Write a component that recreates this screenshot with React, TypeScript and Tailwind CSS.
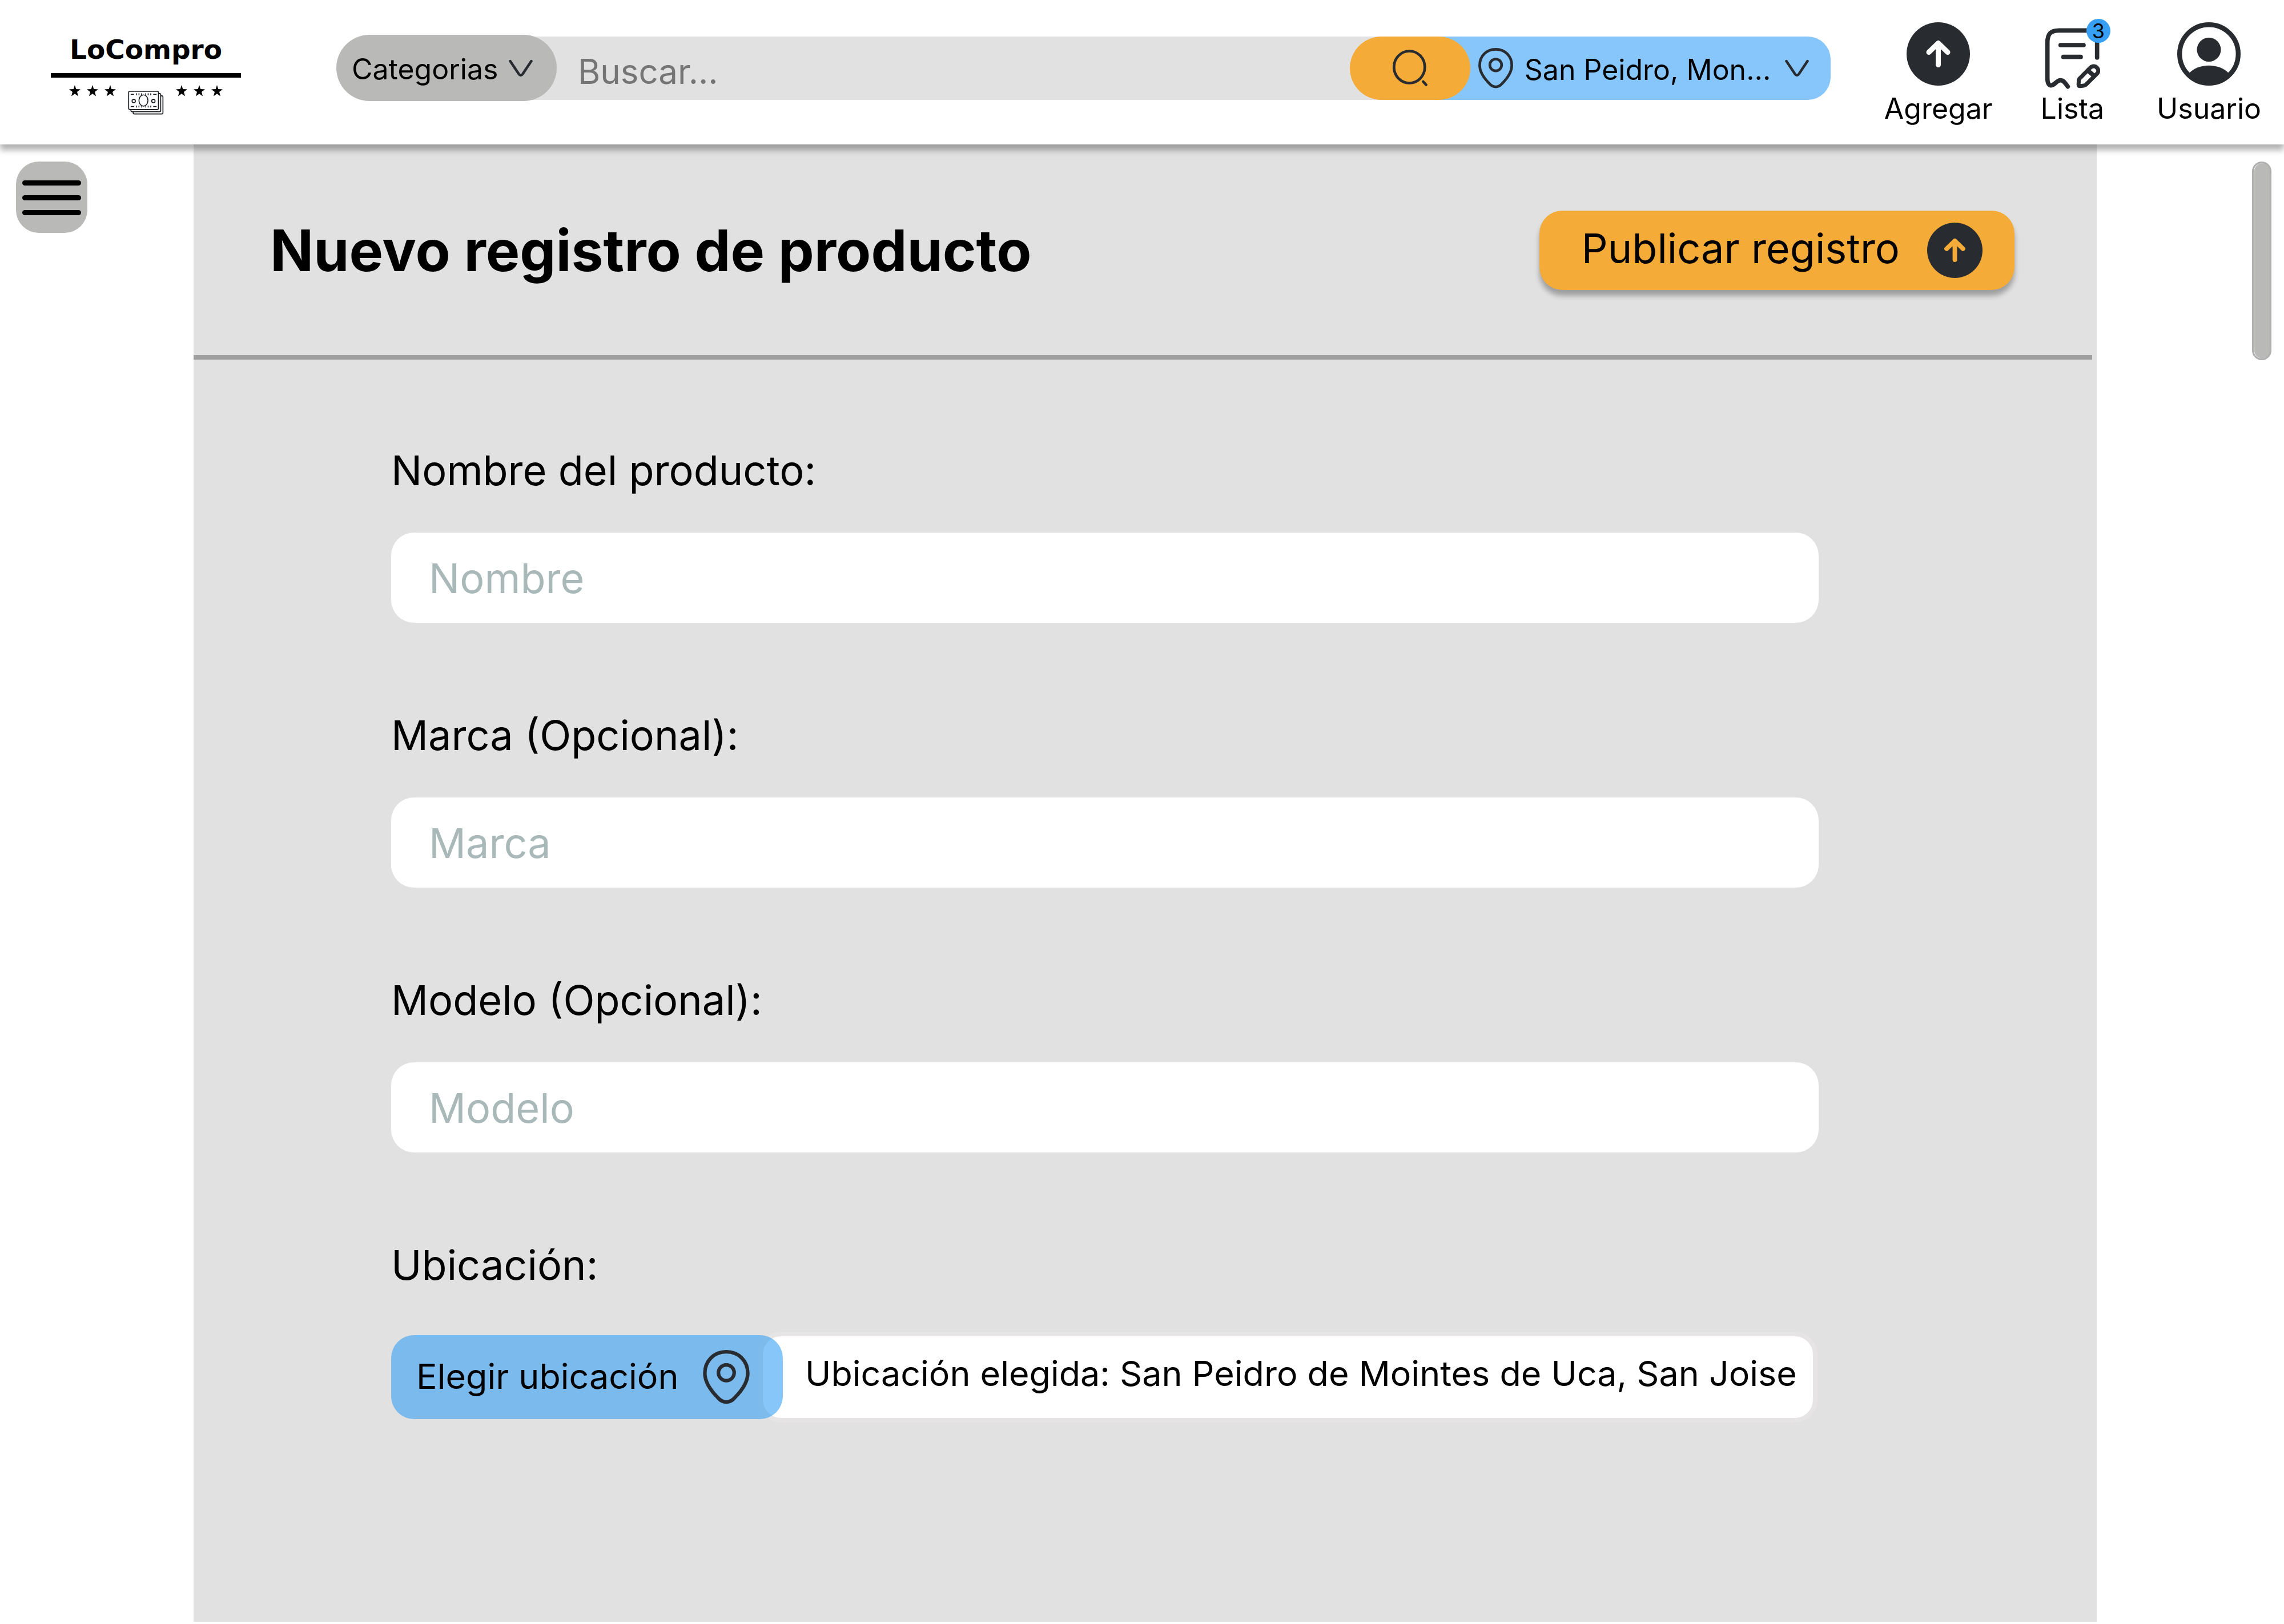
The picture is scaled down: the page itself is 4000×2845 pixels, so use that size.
import type { ReactNode } from "react";

function Chevron() {
  return (
    <svg viewBox="0 0 42 31" className="pointer-events-none h-[31px] w-[42px] shrink-0" fill="none" stroke="#282c31" strokeWidth="4.5" strokeLinecap="round" aria-hidden="true">
      <path d="M2.5 3 L17.5 25.5 Q21 30.5 24.5 25.5 L39.5 3" />
    </svg>
  );
}

function Pin({ className }: { className: string }) {
  return (
    <svg viewBox="0 0 61 71" className={className} fill="none" stroke="#282c31" strokeWidth="4.7" aria-hidden="true">
      <path d="M30.5 2.4 C14 2.4 2.4 14.5 2.4 30.5 C2.4 43.5 11.5 54.5 19.5 62.5 C26 70 35 70 41.5 62.5 C49.5 54.5 58.6 43.5 58.6 30.5 C58.6 14.5 47 2.4 30.5 2.4 Z" />
      <circle cx="30.5" cy="29.8" r="10.3" />
    </svg>
  );
}

function ArrowUpDisc({ className, arrow }: { className: string; arrow: string }) {
  return (
    <svg viewBox="0 0 111 111" className={className} fill="none" aria-hidden="true">
      <circle cx="55.5" cy="55.5" r="55.5" fill="#282c31" />
      <path d="M55.5 38 V74.5 M39 52.5 L55.5 36.5 L72 52.5" stroke={arrow} strokeWidth="9" strokeLinecap="round" strokeLinejoin="round" />
    </svg>
  );
}

function ListIcon() {
  return (
    <svg viewBox="120 88 291 321" className="h-[107px] w-[97px]" fill="none" stroke="#282c31" strokeWidth="23" strokeLinecap="round" strokeLinejoin="round" aria-hidden="true">
      <path d="M345 101 H195 C150 101 134 120 134 165 V352 C134 384 145 391 156 389.500 C177 385 182 363 203 363 C222 363 228 380 241 396" />
      <path d="M395 130 V244 M203 178 H324 M218 240 H309" />
      <path strokeWidth="21" d="M302 355 L359 297 C371 285 388 287 395 298 C404 307 403 320 394 329 L338 384 Q333 390 325 391 L306 393.500 Q297 394 297.500 385 L299 364 Q299 358 302 355 Z" />
      <path strokeLinecap="butt" d="M346 311 L381 341" />
    </svg>
  );
}

function UserIcon() {
  return (
    <svg viewBox="0 0 111 111" className="size-[111px]" aria-hidden="true">
      <circle cx="55.5" cy="55.5" r="51.3" fill="none" stroke="#282c31" strokeWidth="8.4" />
      <circle cx="55.5" cy="48" r="21" fill="#282c31" />
      <path d="M20 90 C37 71 74 71 91 90 A50 50 0 0 1 20 90 Z" fill="#282c31" />
    </svg>
  );
}

function Star() {
  return (
    <svg viewBox="0 0 20 20" className="size-5" aria-hidden="true">
      <path d="M10 0 L12.300 7 L20 7.400 L14 12 L16 19.500 L10 15.200 L4 19.500 L6 12 L0 7.400 L7.700 7 Z" />
    </svg>
  );
}

function Stars() {
  return (
    <span className="flex gap-[11px]">
      <Star />
      <Star />
      <Star />
    </span>
  );
}

function Money() {
  return (
    <svg viewBox="671 475 192 128" className="mt-2.5 h-[42px] w-[63px]" fill="#fff" stroke="#15191d" strokeWidth="5" aria-hidden="true">
      <rect x="699" y="502" width="159" height="97" rx="6" />
      <rect x="687" y="490" width="159" height="97" rx="6" />
      <rect x="675" y="478" width="159" height="97" rx="6" />
      <ellipse cx="754" cy="527" rx="24" ry="30" />
      <circle cx="702" cy="530" r="9" />
      <circle cx="807" cy="530" r="9" />
      <path d="M686 494 H704 M806 494 H824 M686 559 H704 M806 559 H824" />
      <path d="M716 489 V499 M730 489 V499 M744 489 V496 M766 489 V496 M779 489 V499 M793 489 V499 M716 554 V564 M730 554 V564 M744 558 V564 M766 558 V564 M779 554 V564 M793 554 V564" />
    </svg>
  );
}

function Logo() {
  return (
    <a href="#inicio" className="flex w-[333px] shrink-0 flex-col items-center pt-[63px]">
      <span className="font-['DejaVu_Sans',sans-serif] text-[47px] leading-[48px] font-bold">LoCompro</span>
      <span className="mt-[17px] h-2 w-full bg-black" />
      <span className="mt-[13px] flex items-start gap-[21px]">
        <Stars />
        <Money />
        <Stars />
      </span>
    </a>
  );
}

function SearchBar() {
  return (
    <form className="mt-[61px] flex min-w-0 flex-1 items-center" onSubmit={(e) => e.preventDefault()}>
      <div className="relative z-10 flex h-[116px] shrink-0 items-center gap-[18px] rounded-full bg-[#b9b9b7] pr-[42px] pl-[27px]">
        <select aria-label="Categorias" className="appearance-none pt-1 text-[50px] leading-[60px]">
          <option>Categorias</option>
        </select>
        <Chevron />
      </div>
      <input
        type="search"
        aria-label="Buscar"
        placeholder="Buscar..."
        className="-mr-14 -ml-14 h-[111px] min-w-0 flex-1 bg-[#e1e1e1] pt-3 pr-20 pl-[93px] text-[60px] leading-[74px] placeholder:text-[#757575] placeholder:opacity-100"
      />
      <button type="submit" aria-label="Buscar" className="relative z-10 flex h-[111px] w-[211px] shrink-0 items-center justify-center rounded-full bg-[#f5ab37]">
        <svg viewBox="0 0 61 64" className="h-16 w-[61px]" fill="none" stroke="#282c31" strokeWidth="4.7" strokeLinecap="round" aria-hidden="true">
          <ellipse cx="29.3" cy="30.5" rx="27" ry="28" />
          <path d="M53.500 56 L58.500 61.500" />
        </svg>
      </button>
      <div className="-ml-14 flex h-[111px] shrink-0 items-center gap-5 rounded-r-[40px] bg-[#87c6fa] pr-[38px] pl-[70px]">
        <Pin className="h-[71px] w-[61px] shrink-0" />
        <select aria-label="Ubicación" className="mr-1 appearance-none pt-1.5 text-[50px] leading-[60px]">
          <option>San Peidro, Mon...</option>
        </select>
        <Chevron />
      </div>
    </form>
  );
}

function NavItem({ label, className = "", children }: { label: string; className?: string; children: ReactNode }) {
  return (
    <a href={`#${label.toLowerCase()}`} className={`flex flex-col items-center ${className}`}>
      <span className="relative flex h-[111px] items-end">{children}</span>
      <span className="mt-2.5 text-[50px] leading-[60px]">{label}</span>
    </a>
  );
}

function Header() {
  return (
    <header className="relative z-20 flex h-[253px] shrink-0 items-start bg-white pr-10 pl-[89px] shadow-[0_10px_10px_rgba(0,0,0,0.3)]">
      <Logo />
      <div className="flex min-w-0 flex-1 pr-[94px] pl-[167px]">
        <SearchBar />
      </div>
      <nav className="flex shrink-0 gap-[84px] pt-[39px]">
        <NavItem label="Agregar">
          <ArrowUpDisc className="size-[111px]" arrow="#ffffff" />
        </NavItem>
        <NavItem label="Lista" className="pr-2">
          <span className="-mb-1.5">
            <ListIcon />
          </span>
          <span className="absolute -top-1.5 -right-[18px] flex size-[42px] items-center justify-center rounded-full bg-[#37a0f5] text-[36px] leading-none">3</span>
        </NavItem>
        <NavItem label="Usuario">
          <UserIcon />
        </NavItem>
      </nav>
    </header>
  );
}

function Field({ id, label, placeholder }: { id: string; label: string; placeholder: string }) {
  return (
    <div className="flex flex-col gap-[66px]">
      <label htmlFor={id} className="text-[72px] leading-[86px]">
        {label}
      </label>
      <input
        id={id}
        type="text"
        placeholder={placeholder}
        className="h-[158px] w-full rounded-[40px] bg-white px-[66px] text-[72px] leading-[86px] placeholder:text-[#a9b9b9] placeholder:opacity-100"
      />
    </div>
  );
}

export default function App() {
  return (
    <div className="flex min-h-screen flex-col bg-white pb-1 font-[Inter,sans-serif] text-black">
      <Header />
      <div className="flex flex-1">
        <aside className="w-[339px] shrink-0 pt-[30px] pl-7">
          <button type="button" aria-label="Menú" className="flex size-[125px] flex-col items-center justify-center gap-[17px] rounded-[40px] bg-[#b9b9b7] pt-0.5">
            <span className="h-[9px] w-[103px] rounded-full bg-black" />
            <span className="h-[9px] w-[103px] rounded-full bg-black" />
            <span className="h-[9px] w-[103px] rounded-full bg-black" />
          </button>
        </aside>
        <main className="min-w-0 flex-1 bg-[#e1e1e1]">
          <div className="flex items-center justify-between pt-[116px] pr-36 pb-[114px] pl-[134px]">
            <h1 className="text-[100px] leading-[120px] font-bold">Nuevo registro de producto</h1>
            <button type="submit" form="registro" className="flex h-[139px] items-center gap-12 rounded-[40px] bg-[#f5ab37] pr-14 pl-[74px] shadow-[0_10px_10px_rgba(0,0,0,0.3)]">
              <span className="pb-2 text-[72px] leading-[86px]">Publicar registro</span>
              <ArrowUpDisc className="size-[97px]" arrow="#f5ab37" />
            </button>
          </div>
          <hr className="mr-2 h-2 border-0 bg-[#9f9f9f]" />
          <form id="registro" className="flex flex-col gap-[154px] pt-[151px] pr-[487px] pb-20 pl-[346px]" onSubmit={(e) => e.preventDefault()}>
            <Field id="nombre" label="Nombre del producto:" placeholder="Nombre" />
            <Field id="marca" label="Marca (Opcional):" placeholder="Marca" />
            <Field id="modelo" label="Modelo (Opcional):" placeholder="Modelo" />
            <div className="flex flex-col gap-[74px]">
              <label htmlFor="ubicacion" className="text-[72px] leading-[86px]">
                Ubicación:
              </label>
              <div className="flex items-center">
                <button id="ubicacion" type="button" className="relative z-10 flex h-[147px] w-[686px] shrink-0 items-center justify-between rounded-[40px] bg-[#37a0f3]/60 pr-[58px] pl-[44px] text-[61px] leading-[74px]">
                  <span className="pb-1">Elegir ubicación</span>
                  <Pin className="h-[95px] w-[82px]" />
                </button>
                <output htmlFor="ubicacion" className="mr-0.5 -ml-[43px] flex h-[159px] flex-1 items-center rounded-[40px] border-8 border-[#e6e4e4] bg-white pb-3.5 pl-[74px] text-[61px] leading-[74px] whitespace-nowrap">
                  Ubicación elegida: San Peidro de Mointes de Uca, San Joise
                </output>
              </div>
            </div>
          </form>
        </main>
        <aside className="flex w-[328px] shrink-0 justify-end pt-[30px] pr-[22px]">
          <div className="h-[348px] w-[34px] rounded-full border-[3px] border-[#b0b0b0] bg-[#b9b9b7] shadow-[inset_1px_0_0_0_#ffffff]" />
        </aside>
      </div>
    </div>
  );
}
